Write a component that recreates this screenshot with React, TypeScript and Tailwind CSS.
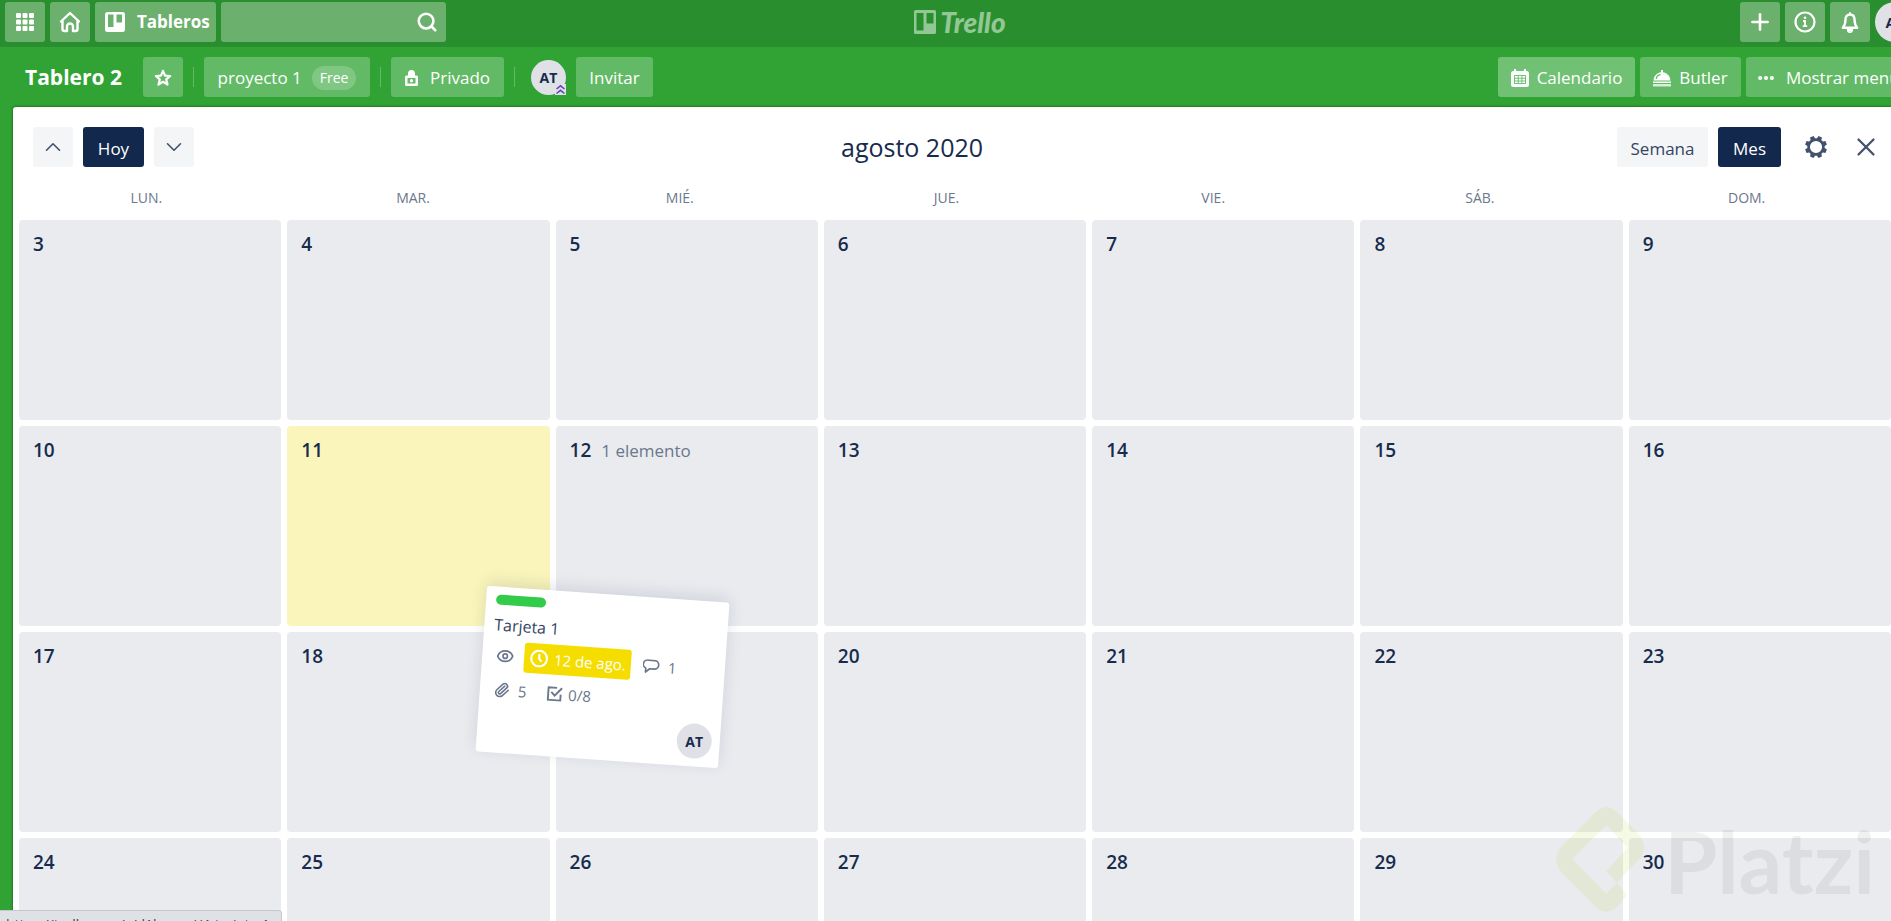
import React from 'react';
import { ChevronDown, ChevronUp, Ellipsis, Eye, Paperclip, Plus, Search, X } from 'lucide-react';

const WEEKDAYS = ['LUN.', 'MAR.', 'MIÉ.', 'JUE.', 'VIE.', 'SÁB.', 'DOM.'];
const DAYS = Array.from({ length: 28 }, (_, i) => i + 3);
const TODAY = 11;
const ITEMS: Record<number, string> = { 12: '1 elemento' };

const headerButton = 'h-10 rounded-[3px] bg-[#6bb06d] text-white flex items-center shrink-0';
const boardButton = 'h-10 rounded-[3px] text-white text-[17px] pt-0.5 flex items-center shrink-0';

const BoardIcon = () => (
  <svg width="20" height="20" viewBox="0 0 20 20" aria-hidden="true">
    <path
      fill="currentColor"
      fillRule="evenodd"
      d="M2.500 0h15A2.500 2.500 0 0 1 20 2.500v15a2.500 2.500 0 0 1-2.500 2.500h-15A2.500 2.500 0 0 1 0 17.500v-15A2.500 2.500 0 0 1 2.500 0ZM3 2.500v12.500h5.500v-12.500ZM11.500 2.500v8h5.500v-8Z"
    />
  </svg>
);

const LogoIcon = () => (
  <svg width="22" height="24" viewBox="0 0 22 24" aria-hidden="true">
    <path
      fill="currentColor"
      fillRule="evenodd"
      d="M1.500 0h19A1.500 1.500 0 0 1 22 1.500v21a1.500 1.500 0 0 1-1.500 1.500h-19A1.500 1.500 0 0 1 0 22.500v-21A1.500 1.500 0 0 1 1.500 0ZM2.500 3v17.500h7V3ZM12.500 3v10.500h7V3Z"
    />
  </svg>
);

const GridIcon = () => (
  <svg width="18" height="18" viewBox="0 0 18 18" fill="currentColor" aria-hidden="true">
    {[0, 6.5, 13].map((y) => [0, 6.5, 13].map((x) => <rect key={`${x}-${y}`} x={x} y={y} width="5" height="5" rx="1" />))}
  </svg>
);

const HomeIcon = () => (
  <svg width="22" height="22" viewBox="0 0 22 22" fill="none" stroke="currentColor" strokeWidth="2.400" strokeLinejoin="round" strokeLinecap="round" aria-hidden="true">
    <path d="M2 10.500 11 2l9 8.500M3.500 9.500V18a2 2 0 0 0 2 2H8v-4.500a3 3 0 0 1 6 0V20h2.500a2 2 0 0 0 2-2V9.500" />
  </svg>
);

const StarIcon = () => (
  <svg width="18" height="18" viewBox="0 0 18 18" fill="none" stroke="currentColor" strokeWidth="2.200" strokeLinejoin="round" aria-hidden="true">
    <path d="m9 1.800 2 4.800 5.200.4-4 3.400 1.300 5.200L9 12.800l-4.500 2.800 1.300-5.200-4-3.400 5.200-.4Z" />
  </svg>
);

const LockIcon = () => (
  <svg width="13" height="16" viewBox="0 0 13 16" aria-hidden="true">
    <path
      fill="currentColor"
      fillRule="evenodd"
      d="M3 5.500V3.500a3.500 3.500 0 0 1 7 0V5.500h1.500A1.500 1.500 0 0 1 13 7v7.500a1.500 1.500 0 0 1-1.500 1.500h-10A1.500 1.500 0 0 1 0 14.500v-7.500A1.500 1.500 0 0 1 1.500 5.500ZM2.500 8v5.500h8v-5.500Z"
    />
    <circle cx="6.500" cy="10.700" r="1.700" fill="currentColor" />
  </svg>
);

const InfoIcon = () => (
  <svg width="22" height="22" viewBox="0 0 22 22" fill="none" stroke="currentColor" strokeWidth="2.200" aria-hidden="true">
    <circle cx="11" cy="11" r="9.500" />
    <path d="M9 10h2v5M8.800 15.200h4.400" strokeWidth="1.800" />
    <circle cx="11" cy="6.800" r="1.300" fill="currentColor" stroke="none" />
  </svg>
);

const BellIcon = () => (
  <svg width="18" height="21" viewBox="0 0 18 21" fill="none" aria-hidden="true">
    <path
      d="M9 2.500c-3 0-4.500 2.200-4.500 4.800 0 4-.8 6.200-2.700 8.500h14.400c-1.900-2.300-2.700-4.500-2.700-8.500 0-2.600-1.500-4.800-4.500-4.800Z"
      stroke="currentColor"
      strokeWidth="2.400"
      strokeLinejoin="round"
    />
    <path d="M9 .3v3M6.800 18h4.400A2.200 2.200 0 0 1 6.800 18Z" stroke="currentColor" strokeWidth="1.800" />
  </svg>
);

const CalendarIcon = () => (
  <svg width="18" height="18" viewBox="0 0 18 18" aria-hidden="true">
    <path
      fill="currentColor"
      fillRule="evenodd"
      d="M3 0h2v2h8V0h2v2h.5A2.500 2.500 0 0 1 18 4.500v11a2.500 2.500 0 0 1-2.500 2.500h-13A2.500 2.500 0 0 1 0 15.500v-11A2.500 2.500 0 0 1 2.500 2H3ZM3 6v9h12V6Z"
    />
    <path
      fill="currentColor"
      d="M4 7h2.700v1.800H4ZM7.700 7h2.700v1.800H7.700ZM11.400 7H14v1.800h-2.600ZM4 9.700h2.700v1.800H4ZM7.700 9.700h2.700v1.800H7.700ZM11.400 9.700H14v1.800h-2.600ZM4 12.400h2.700v1.700H4ZM7.700 12.400h2.700v1.700H7.700ZM11.400 12.400H14v1.700h-2.600Z"
    />
  </svg>
);

const ButlerIcon = () => (
  <svg width="18" height="17" viewBox="0 0 18 17" fill="currentColor" aria-hidden="true">
    <path d="M8 0h2v2.200c4 .5 7.300 3.800 7.500 8.300H.5C.7 6 4 2.700 8 2.200Z" />
    <path d="M3.200 9C3.500 6.600 5.200 5 7.500 4.600" fill="none" stroke="#62ba66" strokeWidth="1.200" />
    <path d="M0 11.500h18V13H0Z" />
    <path d="M0 14h18v2.500H0Z" opacity=".75" />
  </svg>
);

const GearIcon = () => (
  <svg width="22" height="22" viewBox="-11 -11 22 22" aria-hidden="true">
    <circle r="7.400" fill="none" stroke="currentColor" strokeWidth="2.600" />
    {[22.5, 67.5, 112.5, 157.5, 202.5, 247.5, 292.5, 337.5].map((a) => (
      <path key={a} d="M-2.500-7.500-1.900-11h3.800l.6 3.500Z" fill="currentColor" transform={`rotate(${a})`} />
    ))}
  </svg>
);

const TopBar = () => (
  <header className="h-[47px] shrink-0 bg-[#298e2d] flex items-start justify-between pt-0.5">
    <div className="flex flex-1 gap-[5px] pl-[5px]">
      <button aria-label="Aplicaciones" className={`${headerButton} w-10 justify-center`}><GridIcon /></button>
      <button aria-label="Inicio" className={`${headerButton} w-10 justify-center`}><HomeIcon /></button>
      <button className={`${headerButton} w-[121px] pl-2.5 gap-3 font-bold text-[17px]`}>
        <BoardIcon />
        <span>Tableros</span>
      </button>
      <div className={`${headerButton} w-[225px] pr-2`}>
        <input aria-label="Buscar" className="min-w-0 flex-1 h-full bg-transparent px-2 outline-none" />
        <Search size={22} strokeWidth={2.8} />
      </div>
    </div>
    <a href="#" aria-label="Trello" className="flex items-center gap-1 h-10 text-[#94c796]">
      <LogoIcon />
      <span className="font-[Lato] font-black italic text-[28px] leading-8">Trello</span>
    </a>
    <div className="flex flex-1 gap-[5px] justify-end -mr-6">
      <button aria-label="Crear" className={`${headerButton} w-10 justify-center`}><Plus size={26} strokeWidth={2.4} /></button>
      <button aria-label="Información" className={`${headerButton} w-10 justify-center`}><InfoIcon /></button>
      <button aria-label="Notificaciones" className={`${headerButton} w-10 justify-center`}><BellIcon /></button>
      <button className="size-10 shrink-0 rounded-full bg-[#dfe1e6] text-[#172b4d] font-bold text-[15px]">AT</button>
    </div>
  </header>
);

const Separator = () => <span className="w-px h-5 bg-[#62ba66] mx-2.5" />;

const BoardBar = () => (
  <div className="h-[60px] shrink-0 flex items-center justify-between">
    <div className="flex items-center">
      <h1 className="w-[118px] ml-[25px] pt-0.5 text-white font-bold text-[21px]">Tablero 2</h1>
      <button aria-label="Destacar tablero" className={`${boardButton} bg-[#62ba66] w-10 justify-center`}><StarIcon /></button>
      <Separator />
      <button className={`${boardButton} bg-[#62ba66] w-[166px] justify-center gap-2.5`}>
        proyecto 1
        <span className="rounded-full bg-[#81c784] px-2 text-[14px] leading-6">Free</span>
      </button>
      <Separator />
      <button className={`${boardButton} bg-[#62ba66] w-[113px] justify-center gap-3`}>
        <LockIcon />
        Privado
      </button>
      <Separator />
      <button className="relative ml-1.5 mr-2.5 size-[35px] rounded-full bg-[#dfe1e6] text-[#172b4d] font-bold text-[14px]">
        AT
        <svg className="absolute right-0 bottom-0 bg-[#dfe1e6]" width="11" height="11" viewBox="0 0 11 11" fill="none" stroke="#6545b5" strokeWidth="1.600" aria-hidden="true">
          <path d="m1.500 5 4-3.200 4 3.200M1.500 9.500l4-3.200 4 3.200" />
        </svg>
      </button>
      <button className={`${boardButton} bg-[#62ba66] w-[77px] justify-center`}>Invitar</button>
    </div>
    <div className="flex gap-[5px] -mr-4">
      <button className={`${boardButton} bg-[#70c174] w-[137px] justify-center gap-2`}>
        <CalendarIcon />
        Calendario
      </button>
      <button className={`${boardButton} bg-[#62ba66] w-[101px] justify-center gap-2`}>
        <ButlerIcon />
        Butler
      </button>
      <button className={`${boardButton} bg-[#62ba66] w-[161px] pl-2.5 gap-2.5 whitespace-nowrap`}>
        <Ellipsis size={20} strokeWidth={3} />
        Mostrar menú
      </button>
    </div>
  </div>
);

const CalendarToolbar = () => (
  <div className="flex items-center justify-between pl-5 pr-2.5 pt-5 text-[17px]">
    <div className="flex flex-1 gap-2.5">
      <button aria-label="Mes anterior" className="size-10 rounded-[3px] bg-[#f4f5f7] flex items-center justify-center">
        <ChevronUp size={26} strokeWidth={1.5} />
      </button>
      <button className="w-[61px] h-10 rounded-[3px] bg-[#12284c] text-white pt-1">Hoy</button>
      <button aria-label="Mes siguiente" className="size-10 rounded-[3px] bg-[#f4f5f7] flex items-center justify-center">
        <ChevronDown size={26} strokeWidth={1.5} />
      </button>
    </div>
    <h2 className="mr-[90px] text-[25px] leading-9 text-[#172b4d]">agosto 2020</h2>
    <div className="flex flex-1 justify-end items-center">
      <button className="w-[91px] h-10 rounded-[3px] bg-[#f4f5f7] text-[#344563] pt-1">Semana</button>
      <button className="w-[63px] h-10 ml-2.5 rounded-[3px] bg-[#12284c] text-white pt-1">Mes</button>
      <button aria-label="Configuración" className="ml-6"><GearIcon /></button>
      <button aria-label="Cerrar" className="ml-6"><X size={30} strokeWidth={1.8} /></button>
    </div>
  </div>
);

const DraggedCard = () => (
  <article className="absolute left-[481px] top-[594px] w-[243px] h-[166px] rotate-4 rounded-[3px] bg-white shadow-[0_-4px_16px_rgba(9,30,66,0.12)] text-[#6b778c] text-[15px] px-2.5 pt-2">
    <div className="w-[50px] h-2.5 rounded-full bg-[#33cc4a]" />
    <h3 className="mt-1.5 text-[16px] leading-7 text-[#344563]">Tarjeta 1</h3>
    <div className="flex items-center mt-0.5 pl-1">
      <Eye size={18} strokeWidth={2.2} className="-rotate-4" />
      <span className="ml-2.5 h-[30px] w-[107px] rounded-[3px] bg-[#f5dd00] text-white flex items-center gap-1.5 pl-1.5">
        <svg width="18" height="18" viewBox="0 0 18 18" fill="none" stroke="currentColor" strokeWidth="2.200" aria-hidden="true">
          <circle cx="9" cy="9" r="7.900" />
          <path d="M9 4.500V9l2.500 3" />
        </svg>
        12 de ago.
      </span>
      <svg className="ml-3 mr-2" width="17" height="15" viewBox="0 0 17 15" fill="none" stroke="currentColor" strokeWidth="1.700" strokeLinejoin="round" aria-hidden="true">
        <path d="M5.500 1h6a4.200 4.200 0 0 1 0 8.500H7L3 13V9A4.200 4.200 0 0 1 5.500 1Z" />
      </svg>
      1
    </div>
    <div className="flex items-center mt-2 pl-1">
      <Paperclip size={16} strokeWidth={2.4} />
      <span className="ml-2 mr-5">5</span>
      <svg className="mr-1.5" width="16" height="16" viewBox="0 0 16 16" fill="none" stroke="currentColor" strokeWidth="1.900" aria-hidden="true">
        <path d="M10 2H1.500v12.500H14V8.500M4.500 6.500 8 10l7-8" />
      </svg>
      0/8
    </div>
    <span className="absolute right-2 bottom-2 size-[35px] -rotate-4 rounded-full bg-[#dfe1e6] text-[#172b4d] text-[14px] font-bold flex items-center justify-center">
      AT
    </span>
  </article>
);

const Watermark = () => (
  <div className="absolute right-[16px] bottom-0 h-[114px] flex items-start gap-5 pointer-events-none">
    <svg width="88" height="105" viewBox="111 78 264 315" fill="#b4dc3c" fillOpacity=".14" aria-hidden="true">
      <path d="M232 91Q262 66 292 91L364 165Q386 198 364 230L293 305 262 270 325 200 262 132 160 235 262 338 293 305 325 342 292 380Q262 404 232 380L122 268Q102 235 122 203Z" />
    </svg>
    <span className="font-[Lato] text-[86px] leading-[108px] font-bold text-black/6">Platzi</span>
  </div>
);

export default function App() {
  return (
    <div className="relative h-screen overflow-hidden flex flex-col bg-[#30a334] font-['Open_Sans',sans-serif]">
      <TopBar />
      <BoardBar />
      <main className="flex-1 ml-[13px] rounded-tl-[3px] bg-white text-[#42526e] shadow-[0_0_3px_rgba(0,0,0,0.5)]">
        <CalendarToolbar />
        <div className="grid grid-cols-7 mr-[11px] pt-[19px] h-[53px] text-center text-[14px] leading-6 text-[#6b778c]">
          {WEEKDAYS.map((day) => <div key={day}>{day}</div>)}
        </div>
        <div className="grid grid-cols-7 gap-1.5 pl-1.5">
          {DAYS.map((day) => (
            <section
              key={day}
              className={`h-[200px] rounded-[4px] px-3.5 py-3 leading-6 ${day === TODAY ? 'bg-[#faf5bb]' : 'bg-[#eaebef]'}`}
            >
              <span className="text-[19px] font-semibold text-[#172b4d]">{day}</span>
              {ITEMS[day] && <span className="ml-2.5 text-[17px] text-[#6b778c]">{ITEMS[day]}</span>}
            </section>
          ))}
        </div>
      </main>
      <DraggedCard />
      <Watermark />
      <div className="absolute left-0 bottom-0 w-[282px] h-[11px] overflow-hidden rounded-tr-[4px] border-t border-r border-[#c5c9ce] bg-[#dee1e6] pl-1.5 pt-1 text-[14px] leading-5 text-[#3c4043] whitespace-nowrap">
        https://trello.com/c/d1baopvi/4-tarjeta-1
      </div>
    </div>
  );
}
